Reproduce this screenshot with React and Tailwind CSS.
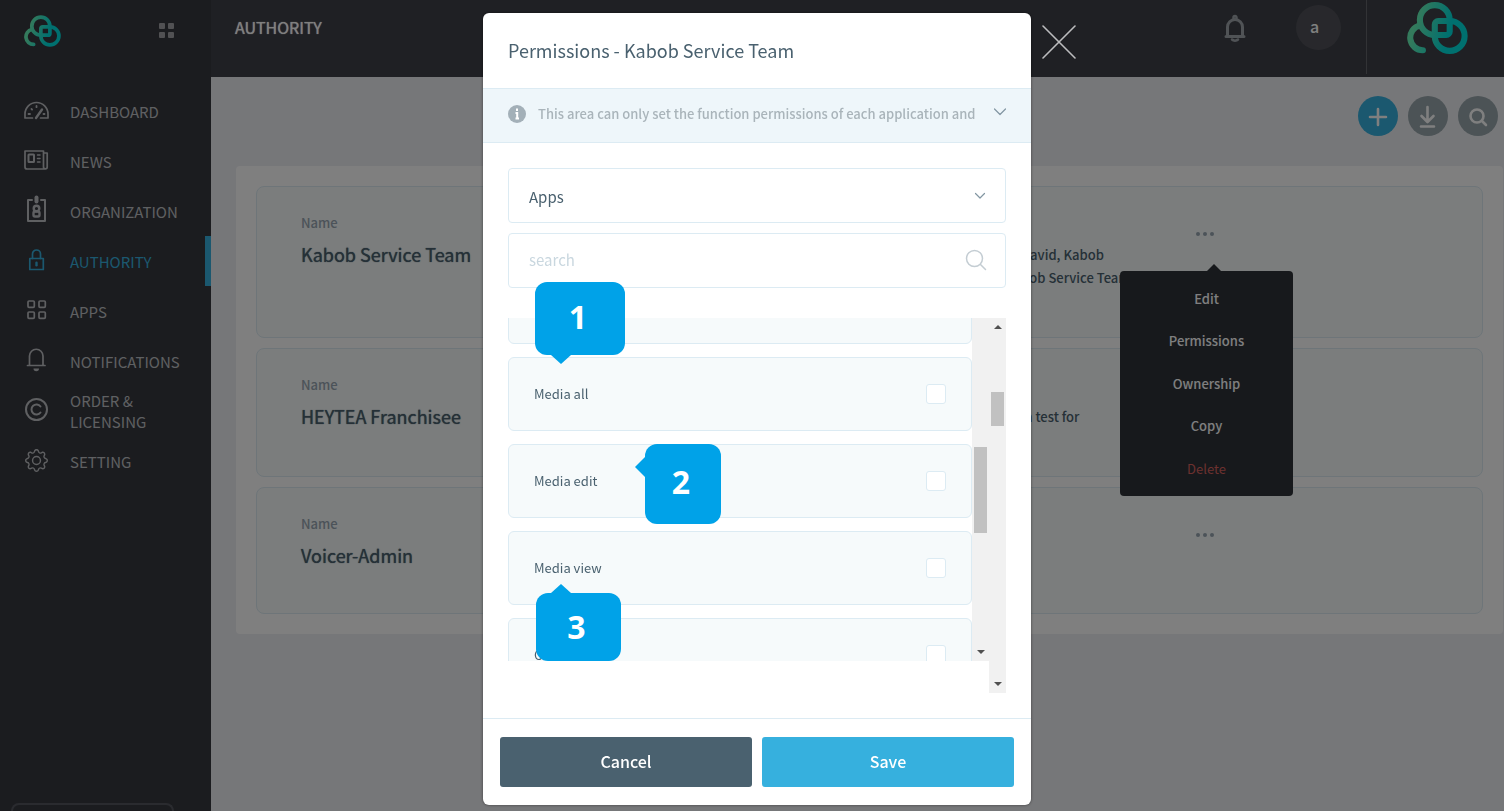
import { useId, useState } from 'react';
import { BsGear } from 'react-icons/bs';

const stroke = {
  fill: 'none',
  stroke: 'currentColor',
  strokeWidth: 1.7,
  strokeLinecap: 'round',
  strokeLinejoin: 'round',
};

function NavIcon({ children }) {
  return (
    <svg className="h-7 w-[26px] shrink-0 overflow-visible" viewBox="0 0 26 28" {...stroke}>
      {children}
    </svg>
  );
}

const NAV = [
  {
    label: 'DASHBOARD',
    icon: (
      <NavIcon>
        <path d="M8.5 21H1V17a11.5 11.5 0 0 1 23 0v4h-7.5" />
        <path d="M12 21l6-8.500" strokeWidth="2.400" />
        <path d="M4.500 17h1.500M19.500 17h1M7.500 12l.6.6M12.500 9v1.200" strokeWidth="1.800" />
      </NavIcon>
    ),
  },
  {
    label: 'NEWS',
    icon: (
      <NavIcon>
        <path d="M20 22H3a2 2 0 0 1-2-2V4h18.500v16a1.800 1.800 0 0 0 3.700 0V6H20" />
        <rect x="4.500" y="7.500" width="5.500" height="7.500" rx="0.500" strokeWidth="2" />
        <path d="M13.500 8h2.500M13.500 11.500h2.500M13.500 15h2.500" strokeWidth="1.500" />
      </NavIcon>
    ),
  },
  {
    label: 'ORGANIZATION',
    icon: (
      <NavIcon>
        <path d="M8 3H4v21h17V3h-4" strokeWidth="2" />
        <path d="M12.500 0.500v4" strokeWidth="4" />
        <circle cx="12.500" cy="11.500" r="2.800" strokeWidth="2.400" />
        <rect x="9.500" y="14.500" width="6" height="5" rx="1.500" strokeWidth="2.400" />
      </NavIcon>
    ),
  },
  {
    label: 'AUTHORITY',
    icon: (
      <NavIcon>
        <rect x="5.800" y="11.500" width="13.500" height="11" />
        <path d="M8.500 11.500V7a4 4 0 0 1 8 0v4.500" />
        <path d="M12.500 15.800v2.400" strokeWidth="2.400" />
      </NavIcon>
    ),
  },
  {
    label: 'APPS',
    icon: (
      <NavIcon>
        <rect x="4" y="4" width="6.300" height="6.300" rx="1" />
        <rect x="15" y="4" width="6.300" height="6.300" rx="1" />
        <rect x="4" y="15" width="6.300" height="6.300" rx="1" />
        <rect x="15" y="15" width="6.300" height="6.300" rx="1" />
      </NavIcon>
    ),
  },
  {
    label: 'NOTIFICATIONS',
    icon: (
      <NavIcon>
        <path d="M3.500 18.500h17.500M5.500 18V9a6.500 6.500 0 0 1 13.500 0v9" />
        <path d="M9.500 21.500h5.500a2.700 2.700 0 0 1-5.500 0z" fill="currentColor" stroke="none" />
      </NavIcon>
    ),
  },
  {
    label: 'ORDER & LICENSING',
    icon: (
      <NavIcon>
        <circle cx="12.500" cy="12.500" r="10.500" strokeWidth="2" />
        <path d="M16.500 9.500a5 5 0 1 0 0 6" strokeWidth="2" />
      </NavIcon>
    ),
  },
  {
    label: 'SETTING',
    icon: <BsGear className="mb-[2px] ml-px mr-[2px] h-[23px] w-[23px] shrink-0" />,
  },
];

const ROWS = [
  {
    name: 'Kabob Service Team',
    height: 'min-h-[152px]',
    lines: [
      { text: 'David, Kabob', className: 'pl-4' },
      { text: 'Kabob Service Team', className: 'pl-0' },
    ],
    menu: true,
  },
  {
    name: 'HEYTEA Franchisee',
    height: 'min-h-[129px]',
    lines: [{ text: 'a test for', className: 'pl-5' }],
  },
  { name: 'Voicer-Admin', height: 'min-h-[127px]', lines: [] },
];

const PERMISSIONS = ['Media all', 'Media edit', 'Media view', 'Campaign all'];

function Logo({ className }) {
  const id = useId();
  return (
    <svg className={className} viewBox="0 0 180 153" fill="none" aria-label="Kabob">
      <defs>
        <linearGradient id={id} gradientUnits="userSpaceOnUse" x1="10" y1="60" x2="150" y2="100">
          <stop offset="0.1" stopColor="#68f4b8" />
          <stop offset="0.8" stopColor="#00e0de" />
        </linearGradient>
      </defs>
      <g stroke={`url(#${id})`} strokeWidth="18" strokeLinecap="round">
        <path d="M126 53A44 44 0 1 0 82 97H116a10 10 0 0 0 10-10z" />
        <path d="M82 100A44 44 0 1 0 126 56H92a10 10 0 0 0-10 10z" />
        <path d="M38 69A37 37 0 0 0 47 142" />
      </g>
    </svg>
  );
}

function Sidebar() {
  return (
    <aside className="flex w-[211px] shrink-0 flex-col bg-[#36383f] text-[#bfc0c4]">
      <div className="flex h-[86px] items-start justify-between pl-6 pr-[37px] pt-[15px]">
        <Logo className="h-8 w-[37px]" />
        <button type="button" aria-label="Toggle menu" className="mt-2 grid grid-cols-2 gap-[3px]">
          {[0, 1, 2, 3].map((i) => (
            <span key={i} className="h-[6px] w-[6px] rounded-[1px] bg-[#a2a3a6]" />
          ))}
        </button>
      </div>
      <nav>
        {NAV.map(({ label, icon }) => (
          <a
            key={label}
            href="#"
            className={
              label === 'AUTHORITY'
                ? 'flex h-[50px] items-center gap-5 border-r-[6px] border-[#36b0de] pl-6 text-[#36b0de]'
                : 'flex h-[50px] items-center gap-5 pl-6 pr-6'
            }
          >
            {icon}
            <span className="text-[15px] leading-[21px]">{label}</span>
          </a>
        ))}
      </nav>
      <div className="ml-[11px] mr-[37px] mt-auto h-2 rounded-t-lg border-2 border-b-0 border-[#55575f]" />
    </aside>
  );
}

function TopBar() {
  return (
    <header className="flex h-[77px] shrink-0 items-start bg-[#3e4048] pl-6 text-white">
      <h1 className="mt-[15px] text-base leading-6 [text-shadow:0_0_1px_currentColor]">AUTHORITY</h1>
      <button type="button" aria-label="Notifications" className="ml-auto mt-[14px] text-[#a0a6ac]">
        <svg className="h-7 w-[22px]" viewBox="0 0 22 28" {...stroke} strokeWidth="3">
          <path d="M2 22.500h18M3.500 22V13a7.500 7.500 0 0 1 15 0v9" />
          <path d="M9.500 4.500V3.500a1.500 1.500 0 0 1 3 0v1M8 25.500c1.500 1.500 4.500 1.500 6 0" strokeWidth="2.500" />
        </svg>
      </button>
      <button
        type="button"
        className="ml-[50px] mt-[5px] h-[45px] w-[45px] rounded-full bg-[#505158] pb-1 pr-2 text-base font-medium"
      >
        a
      </button>
      <div className="ml-[25px] h-[74px] w-px bg-[#64666c]" />
      <Logo className="ml-10 mr-9 mt-[2px] h-[52px] w-[61px]" />
    </header>
  );
}

function Toolbar() {
  return (
    <div className="flex justify-end gap-[10px] pr-[5px]">
      <button type="button" aria-label="Add" className="h-10 w-10 rounded-full bg-[#36b0de] text-white">
        <svg viewBox="0 0 40 40" {...stroke} strokeWidth="2.600">
          <path d="M20 13v16M12 21h16" />
        </svg>
      </button>
      <button type="button" aria-label="Download" className="h-10 w-10 rounded-full bg-[#98a6ac] text-white">
        <svg viewBox="0 0 40 40" {...stroke} strokeWidth="2.600">
          <path d="M19.500 11v14M13.500 20l6 6 6-6M13 30.500h13" />
        </svg>
      </button>
      <button type="button" aria-label="Search" className="h-10 w-10 rounded-full bg-[#98a6ac] text-white">
        <svg viewBox="0 0 40 40" {...stroke} strokeWidth="2.600">
          <circle cx="19" cy="20" r="6.500" />
          <path d="M24 25l4 4" />
        </svg>
      </button>
    </div>
  );
}

function RowMenu() {
  return (
    <div className="absolute left-[-76px] top-10 z-10 flex h-[225px] w-[173px] flex-col rounded bg-[#2e3239] py-[6px] font-medium text-white">
      <span className="absolute bottom-full left-[87px] border-x-[7px] border-b-[7px] border-x-transparent border-b-[#2e3239]" />
      {['Edit', 'Permissions', 'Ownership', 'Copy'].map((item) => (
        <button key={item} type="button" className="flex-1 text-[13px]">
          {item}
        </button>
      ))}
      <button type="button" className="flex-1 text-[13px] font-normal text-[#d9625e]">
        Delete
      </button>
    </div>
  );
}

function RoleCard({ name, height, lines, menu }) {
  return (
    <article
      className={`grid grid-cols-[704fr_191fr_286fr] rounded-lg border border-[#dcebf3] bg-[#f6fafa] pl-11 ${height}`}
    >
      <div className="pt-[26px]">
        <p className="text-[13px] font-medium leading-5 text-[#98a6b2]">Name</p>
        <h2 className="mt-2 text-lg leading-[27px] text-[#4a616f] [text-shadow:0_0_1px_currentColor]">{name}</h2>
      </div>
      <div className="whitespace-nowrap pt-14 text-[13px] font-medium leading-[23px] text-[#4a616f]">
        {lines.map((line) => (
          <p key={line.text} className={line.className}>
            {line.text}
          </p>
        ))}
      </div>
      <div className="pt-[44px]">
        <div className="relative w-fit">
          <button type="button" aria-label="More actions" className="flex gap-[3px] py-px">
            <span className="h-1 w-1 rounded-full bg-[#98a6b2]" />
            <span className="h-1 w-1 rounded-full bg-[#98a6b2]" />
            <span className="h-1 w-1 rounded-full bg-[#98a6b2]" />
          </button>
          {menu && <RowMenu />}
        </div>
      </div>
    </article>
  );
}

function PermissionRow({ label }) {
  const [checked, setChecked] = useState(false);
  return (
    <label className="flex h-[74px] shrink-0 items-center justify-between rounded-md border border-[#dcebf3] bg-[#f6fafb] px-[25px] text-[13px] text-[#4a616f]">
      {label}
      <input
        type="checkbox"
        checked={checked}
        onChange={(e) => setChecked(e.target.checked)}
        className="h-5 w-5 appearance-none rounded-[3px] border border-[#dcebf3] bg-white checked:bg-[#36b0de]"
      />
    </label>
  );
}

function PermissionList() {
  return (
    <div className="relative mt-[30px] flex h-[375px]">
      <div className="flex h-[343px] flex-1 overflow-hidden">
        <div className="-mt-12 flex flex-1 flex-col gap-[13px]">
          <div className="h-[74px] shrink-0 rounded-md border border-[#dcebf3] bg-[#f6fafb]" />
          {PERMISSIONS.map((label) => (
            <PermissionRow key={label} label={label} />
          ))}
        </div>
        {/* inner scroll track */}
        <div className="flex w-[17px] flex-col items-center bg-[#f1f1f1] pt-[129px]">
          <div className="h-[86px] w-[13px] bg-[#c1c1c1]" />
          <span className="mb-[7px] mt-auto border-x-[4px] border-t-[4px] border-x-transparent border-t-[#505050]" />
        </div>
      </div>
      {/* outer scroll track */}
      <div className="flex w-[17px] flex-col items-center bg-[#f1f1f1] py-[7px]">
        <span className="border-x-[4px] border-b-[4px] border-x-transparent border-b-[#505050]" />
        <div className="mt-[63px] h-[34px] w-[13px] bg-[#c1c1c1]" />
        <span className="mt-auto border-x-[4px] border-t-[4px] border-x-transparent border-t-[#505050]" />
      </div>

      <Callout className="left-[27px] top-[-36px] h-[73px] w-[90px] pb-1">
        1
        <span className="absolute left-4 top-full border-x-[10px] border-t-[9px] border-x-transparent border-t-[#00a2e8]" />
      </Callout>
      <Callout className="left-[137px] top-[126px] h-20 w-[76px] pb-1">
        2
        <span className="absolute right-full top-[13px] border-y-[10px] border-r-[10px] border-y-transparent border-r-[#00a2e8]" />
      </Callout>
      <Callout className="left-7 top-[275px] h-[68px] w-[85px]">
        3
        <span className="absolute bottom-full left-[15px] border-x-[10px] border-b-[9px] border-x-transparent border-b-[#00a2e8]" />
      </Callout>
    </div>
  );
}

function Callout({ className, children }) {
  return (
    <div
      className={`absolute flex items-center justify-center rounded-xl bg-[#00a2e8] pr-1 font-['Open_Sans',sans-serif] text-[32px] font-bold leading-8 text-white ${className}`}
    >
      {children}
    </div>
  );
}

function PermissionsModal() {
  return (
    <div className="fixed inset-0 z-20 flex items-start justify-center bg-black/50 pl-[10px] pt-[13px]">
      <section
        role="dialog"
        aria-labelledby="modal-title"
        className="relative w-[548px] rounded-md bg-white text-[#4a616f] shadow-[0_0_3px_rgba(0,0,0,0.5)]"
      >
        <h2 id="modal-title" className="px-[25px] py-6 text-lg leading-[27px]">
          Permissions - Kabob Service Team
        </h2>
        <div className="flex h-[55px] items-center border-y border-[#dcebf3] bg-[#eef6fa] px-[25px] pb-[3px] text-[#a3b0b8]">
          <svg className="h-[18px] w-[18px] shrink-0" viewBox="0 0 18 18">
            <circle cx="9" cy="9" r="9" fill="currentColor" />
            <path d="M9 3.500v2.500M7.500 8h1.700v5.500M7.500 13.500h3.500" stroke="#fff" strokeWidth="2" fill="none" />
          </svg>
          <p className="ml-3 whitespace-nowrap text-[13px] font-medium text-[#a9b4ba]">
            This area can only set the function permissions of each application and
          </p>
          <button type="button" aria-label="Expand" className="mb-1 ml-auto text-[#8296a2]">
            <svg className="h-2 w-3" viewBox="0 0 12 8" {...stroke} strokeWidth="1.200">
              <path d="M0.500 1L6 6.500 11.500 1" />
            </svg>
          </button>
        </div>

        <div className="p-[25px]">
          <div className="relative">
            <select
              aria-label="Category"
              className="h-[55px] w-full appearance-none rounded border border-[#dcebf3] bg-white px-5 pt-1 text-[15px]"
            >
              <option>Apps</option>
            </select>
            <svg
              className="pointer-events-none absolute right-[21px] top-[25px] h-[6px] w-[10px] overflow-visible text-[#8296a2]"
              viewBox="0 0 10 6"
              {...stroke}
              strokeWidth="1.200"
            >
              <path d="M0.500 0.500L5 5 9.500 0.500" />
            </svg>
          </div>
          <div className="relative mt-[10px]">
            <input
              type="text"
              aria-label="Search permissions"
              placeholder="search"
              className="h-[55px] w-full rounded border border-[#dcebf3] px-5 pb-[2px] text-[15px] placeholder:text-[#c9d7df]"
            />
            <svg
              className="pointer-events-none absolute right-[19px] top-4 h-[22px] w-[22px] text-[#c4cdd3]"
              viewBox="0 0 22 22"
              {...stroke}
              strokeWidth="1.500"
            >
              <circle cx="9.500" cy="9.500" r="8" />
              <path d="M15.500 15.500l5 5" />
            </svg>
          </div>
          <PermissionList />
        </div>

        <footer className="flex gap-[10px] border-t border-[#dcebf3] px-[17px] py-[18px] text-base font-medium text-white">
          <button type="button" className="h-[50px] flex-1 rounded-[3px] bg-[#4a616f] pb-[2px]">
            Cancel
          </button>
          <button type="button" className="h-[50px] flex-1 rounded-[3px] bg-[#36b0de] pb-[2px]">
            Save
          </button>
        </footer>

        <button type="button" aria-label="Close" className="absolute left-full top-3 ml-[11px] text-[#bcbcbe]">
          <svg className="h-[34px] w-[34px]" viewBox="0 0 34 34" {...stroke} strokeWidth="1.600">
            <path d="M1 1l32 32M33 1L1 33" />
          </svg>
        </button>
      </section>
    </div>
  );
}

export default function App() {
  return (
    <div className="flex h-screen overflow-hidden bg-[#edeef2] font-['Noto_Sans_CJK_SC',sans-serif]">
      <Sidebar />
      <div className="flex min-w-0 flex-1 flex-col">
        <TopBar />
        <main className="pl-[25px] pr-px pt-[19px]">
          <Toolbar />
          <section className="mt-[30px] flex flex-col gap-[10px] rounded bg-white p-5">
            {ROWS.map((row) => (
              <RoleCard key={row.name} {...row} />
            ))}
          </section>
        </main>
      </div>
      <PermissionsModal />
    </div>
  );
}
